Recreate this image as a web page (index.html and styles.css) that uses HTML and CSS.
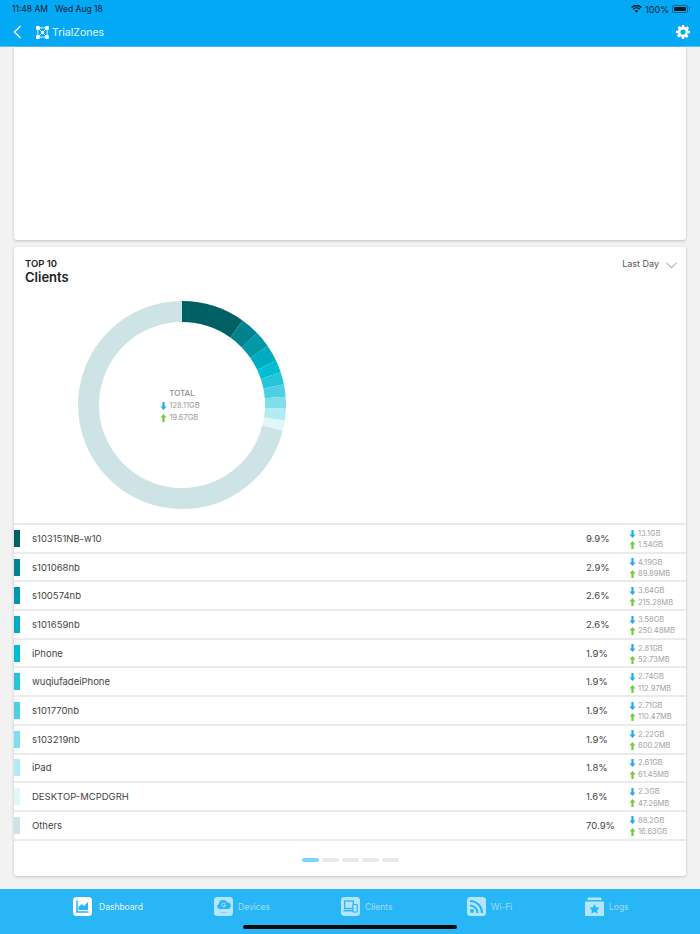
FILE: index.html
```html
<!DOCTYPE html>
<html lang="en">
<head>
    <meta charset="UTF-8">
    <meta name="viewport" content="width=device-width, initial-scale=1.0">
    <title>TrialZones</title>
    <link rel="stylesheet" href="styles.css">
</head>
<body>
    <div class="app">
        <header class="topbar">
            <div class="status">
                <span class="status-time">11:48 AM</span>
                <span class="status-date">Wed Aug 18</span>
                <span class="status-right">
                    <svg class="wifi" viewBox="0 0 16 12" width="11" height="8"><path d="M8 11.500 5.600 8.800a3.400 3.400 0 0 1 4.800 0zM3.900 7.100 2.500 5.500a7.900 7.900 0 0 1 11 0l-1.400 1.600a5.800 5.800 0 0 0-8.200 0zM1.400 4.400 0 2.900a11.500 11.500 0 0 1 16 0l-1.400 1.500a9.500 9.500 0 0 0-13.200 0z" fill="#06141c"/></svg>
                    <span>100%</span>
                    <span class="battery"><span class="battery-fill"></span></span>
                </span>
            </div>
            <nav class="navbar">
                <svg class="back" viewBox="0 0 9 14" width="9" height="14"><path d="M7.500 1 1.500 7l6 6" fill="none" stroke="#fff" stroke-width="1.500"/></svg>
                <svg class="logo" viewBox="0 0 14 14" width="13" height="13">
                    <g fill="#fff"><rect x="0" y="0" width="4" height="4" rx="1"/><rect x="10" y="0" width="4" height="4" rx="1"/><rect x="0" y="10" width="4" height="4" rx="1"/><rect x="10" y="10" width="4" height="4" rx="1"/><rect x="5.500" y="5.500" width="3" height="3"/></g>
                    <path d="M2 2h10v10H2zM2 2l10 10M12 2 2 12" fill="none" stroke="#fff" stroke-width=".9"/>
                </svg>
                <span class="brand">TrialZones</span>
                <svg class="gear" viewBox="0 0 24 24" width="14" height="14"><path fill="#fff" fill-rule="evenodd" d="M10 0h4l.7 3.400 1.900.8 2.900-1.900 2.800 2.800-1.900 2.900.8 1.900L24 10v4l-3.800.7-.8 1.900 1.900 2.900-2.800 2.800-2.900-1.900-1.900.8L14 24h-4l-.7-3.800-1.900-.8-2.900 1.900-2.800-2.800 1.900-2.900-.8-1.900L0 14v-4l3.800-.7.8-1.900-1.900-2.900 2.800-2.800 2.900 1.900 1.900-.8zM12 7.600a4.400 4.400 0 1 0 0 8.800 4.400 4.400 0 0 0 0-8.800z"/></svg>
            </nav>
        </header>

        <main class="content">
            <section class="card card-blank"></section>

            <section class="card card-top">
                <div class="card-head">
                    <div>
                        <div class="card-kicker">TOP 10</div>
                        <h2 class="card-title">Clients</h2>
                    </div>
                    <div class="range">
                        <span>Last Day</span>
                        <svg viewBox="0 0 12 7" width="11" height="7"><path d="M.5.5 6 6 11.500.5" fill="none" stroke="#a8a8a8" stroke-width="1.100"/></svg>
                    </div>
                </div>

                <div class="chart">
                    <svg class="donut" viewBox="0 0 208 208" width="208" height="208">
                        <g fill="none" stroke-width="21" transform="rotate(-90 104 104)">
                            <circle cx="104" cy="104" r="93.500" pathLength="100" stroke="#006064" stroke-dasharray="9.9 90.1"/>
                            <circle cx="104" cy="104" r="93.500" pathLength="100" stroke="#00838f" stroke-dasharray="2.9 97.1" stroke-dashoffset="-9.9"/>
                            <circle cx="104" cy="104" r="93.500" pathLength="100" stroke="#0097a7" stroke-dasharray="2.6 97.4" stroke-dashoffset="-12.8"/>
                            <circle cx="104" cy="104" r="93.500" pathLength="100" stroke="#00acc1" stroke-dasharray="2.6 97.4" stroke-dashoffset="-15.4"/>
                            <circle cx="104" cy="104" r="93.500" pathLength="100" stroke="#00bcd4" stroke-dasharray="1.9 98.1" stroke-dashoffset="-18"/>
                            <circle cx="104" cy="104" r="93.500" pathLength="100" stroke="#26c6da" stroke-dasharray="1.9 98.1" stroke-dashoffset="-19.9"/>
                            <circle cx="104" cy="104" r="93.500" pathLength="100" stroke="#4dd0e1" stroke-dasharray="1.9 98.1" stroke-dashoffset="-21.8"/>
                            <circle cx="104" cy="104" r="93.500" pathLength="100" stroke="#80deea" stroke-dasharray="1.9 98.1" stroke-dashoffset="-23.7"/>
                            <circle cx="104" cy="104" r="93.500" pathLength="100" stroke="#b2ebf2" stroke-dasharray="1.8 98.2" stroke-dashoffset="-25.6"/>
                            <circle cx="104" cy="104" r="93.500" pathLength="100" stroke="#e0f7fa" stroke-dasharray="1.6 98.4" stroke-dashoffset="-27.4"/>
                            <circle cx="104" cy="104" r="93.500" pathLength="100" stroke="#cde3e6" stroke-dasharray="71 29" stroke-dashoffset="-29"/>
                        </g>
                    </svg>
                    <div class="donut-label">
                        <div class="donut-total">TOTAL</div>
                        <div class="traffic-block">
                            <div class="traffic-line"><svg class="arrow" viewBox="0 0 8 9" width="7" height="8"><path d="M4 9 .5 5h2.200V0h2.600v5H7.500z" fill="#29a9f0"/></svg>128.11GB</div>
                            <div class="traffic-line"><svg class="arrow" viewBox="0 0 8 9" width="7" height="8"><path d="M4 0 .5 4h2.200v5h2.600V4H7.500z" fill="#7ac943"/></svg>19.67GB</div>
                        </div>
                    </div>
                </div>

                <ul class="rows">
                    <li class="row"><i class="swatch c1"></i><span class="row-name">s103151NB-w10</span><span class="row-pct">9.9%</span><div class="row-traffic"><div><svg class="arrow" viewBox="0 0 8 9" width="7" height="8"><path d="M4 9 .5 5h2.200V0h2.600v5H7.500z" fill="#29a9f0"/></svg>13.1GB</div><div><svg class="arrow" viewBox="0 0 8 9" width="7" height="8"><path d="M4 0 .5 4h2.200v5h2.600V4H7.500z" fill="#7ac943"/></svg>1.54GB</div></div></li>
                    <li class="row"><i class="swatch c2"></i><span class="row-name">s101068nb</span><span class="row-pct">2.9%</span><div class="row-traffic"><div><svg class="arrow" viewBox="0 0 8 9" width="7" height="8"><path d="M4 9 .5 5h2.200V0h2.600v5H7.500z" fill="#29a9f0"/></svg>4.19GB</div><div><svg class="arrow" viewBox="0 0 8 9" width="7" height="8"><path d="M4 0 .5 4h2.200v5h2.600V4H7.500z" fill="#7ac943"/></svg>89.89MB</div></div></li>
                    <li class="row"><i class="swatch c3"></i><span class="row-name">s100574nb</span><span class="row-pct">2.6%</span><div class="row-traffic"><div><svg class="arrow" viewBox="0 0 8 9" width="7" height="8"><path d="M4 9 .5 5h2.200V0h2.600v5H7.500z" fill="#29a9f0"/></svg>3.64GB</div><div><svg class="arrow" viewBox="0 0 8 9" width="7" height="8"><path d="M4 0 .5 4h2.200v5h2.600V4H7.500z" fill="#7ac943"/></svg>215.28MB</div></div></li>
                    <li class="row"><i class="swatch c4"></i><span class="row-name">s101659nb</span><span class="row-pct">2.6%</span><div class="row-traffic"><div><svg class="arrow" viewBox="0 0 8 9" width="7" height="8"><path d="M4 9 .5 5h2.200V0h2.600v5H7.500z" fill="#29a9f0"/></svg>3.58GB</div><div><svg class="arrow" viewBox="0 0 8 9" width="7" height="8"><path d="M4 0 .5 4h2.200v5h2.600V4H7.500z" fill="#7ac943"/></svg>250.48MB</div></div></li>
                    <li class="row"><i class="swatch c5"></i><span class="row-name">iPhone</span><span class="row-pct">1.9%</span><div class="row-traffic"><div><svg class="arrow" viewBox="0 0 8 9" width="7" height="8"><path d="M4 9 .5 5h2.200V0h2.600v5H7.500z" fill="#29a9f0"/></svg>2.81GB</div><div><svg class="arrow" viewBox="0 0 8 9" width="7" height="8"><path d="M4 0 .5 4h2.200v5h2.600V4H7.500z" fill="#7ac943"/></svg>52.73MB</div></div></li>
                    <li class="row"><i class="swatch c6"></i><span class="row-name">wuqiufadeiPhone</span><span class="row-pct">1.9%</span><div class="row-traffic"><div><svg class="arrow" viewBox="0 0 8 9" width="7" height="8"><path d="M4 9 .5 5h2.200V0h2.600v5H7.500z" fill="#29a9f0"/></svg>2.74GB</div><div><svg class="arrow" viewBox="0 0 8 9" width="7" height="8"><path d="M4 0 .5 4h2.200v5h2.600V4H7.500z" fill="#7ac943"/></svg>112.97MB</div></div></li>
                    <li class="row"><i class="swatch c7"></i><span class="row-name">s101770nb</span><span class="row-pct">1.9%</span><div class="row-traffic"><div><svg class="arrow" viewBox="0 0 8 9" width="7" height="8"><path d="M4 9 .5 5h2.200V0h2.600v5H7.500z" fill="#29a9f0"/></svg>2.71GB</div><div><svg class="arrow" viewBox="0 0 8 9" width="7" height="8"><path d="M4 0 .5 4h2.200v5h2.600V4H7.500z" fill="#7ac943"/></svg>110.47MB</div></div></li>
                    <li class="row"><i class="swatch c8"></i><span class="row-name">s103219nb</span><span class="row-pct">1.9%</span><div class="row-traffic"><div><svg class="arrow" viewBox="0 0 8 9" width="7" height="8"><path d="M4 9 .5 5h2.200V0h2.600v5H7.500z" fill="#29a9f0"/></svg>2.22GB</div><div><svg class="arrow" viewBox="0 0 8 9" width="7" height="8"><path d="M4 0 .5 4h2.200v5h2.600V4H7.500z" fill="#7ac943"/></svg>600.2MB</div></div></li>
                    <li class="row"><i class="swatch c9"></i><span class="row-name">iPad</span><span class="row-pct">1.8%</span><div class="row-traffic"><div><svg class="arrow" viewBox="0 0 8 9" width="7" height="8"><path d="M4 9 .5 5h2.200V0h2.600v5H7.500z" fill="#29a9f0"/></svg>2.61GB</div><div><svg class="arrow" viewBox="0 0 8 9" width="7" height="8"><path d="M4 0 .5 4h2.200v5h2.600V4H7.500z" fill="#7ac943"/></svg>61.45MB</div></div></li>
                    <li class="row"><i class="swatch c10"></i><span class="row-name">DESKTOP-MCPDGRH</span><span class="row-pct">1.6%</span><div class="row-traffic"><div><svg class="arrow" viewBox="0 0 8 9" width="7" height="8"><path d="M4 9 .5 5h2.200V0h2.600v5H7.500z" fill="#29a9f0"/></svg>2.3GB</div><div><svg class="arrow" viewBox="0 0 8 9" width="7" height="8"><path d="M4 0 .5 4h2.200v5h2.600V4H7.500z" fill="#7ac943"/></svg>47.26MB</div></div></li>
                    <li class="row"><i class="swatch c11"></i><span class="row-name">Others</span><span class="row-pct">70.9%</span><div class="row-traffic"><div><svg class="arrow" viewBox="0 0 8 9" width="7" height="8"><path d="M4 9 .5 5h2.200V0h2.600v5H7.500z" fill="#29a9f0"/></svg>88.2GB</div><div><svg class="arrow" viewBox="0 0 8 9" width="7" height="8"><path d="M4 0 .5 4h2.200v5h2.600V4H7.500z" fill="#7ac943"/></svg>16.63GB</div></div></li>
                </ul>

                <div class="pager">
                    <span class="dot dot-on"></span>
                    <span class="dot"></span>
                    <span class="dot"></span>
                    <span class="dot"></span>
                    <span class="dot"></span>
                </div>
            </section>
        </main>

        <footer class="tabbar">
            <a class="tab tab-dash tab-on">
                <svg viewBox="0 0 19 19" width="19" height="19"><rect width="19" height="19" rx="3.500" fill="#fff"/><path d="M4 3.500v11.500h11.500" fill="none" stroke="#29b6f6" stroke-width="1.600"/><path d="M5.500 13V10l3-3 2.500 2 4-4v8z" fill="#29b6f6"/></svg>
                <span>Dashboard</span>
            </a>
            <a class="tab tab-devices">
                <svg viewBox="0 0 19 19" width="19" height="19"><rect width="19" height="19" rx="3.500" fill="#b3e5fc"/><path d="M5.500 12a2.500 2.500 0 0 1-.6-4.900A4.500 4.500 0 0 1 9.500 3c1.600 0 3 .9 3.700 2.200A3.400 3.400 0 0 1 13.500 12z" fill="#29b6f6"/><path d="M11.500 6.900a2 2 0 1 0 .3 1.400H10" fill="none" stroke="#b3e5fc" stroke-width="1"/><path d="M6.500 15.500h6" stroke="#7fd0f5" stroke-width="1"/></svg>
                <span>Devices</span>
            </a>
            <a class="tab tab-clients">
                <svg viewBox="0 0 19 19" width="19" height="19"><rect width="19" height="19" rx="3.500" fill="#b3e5fc"/><rect x="3.700" y="4" width="8.600" height="7.500" fill="none" stroke="#29b6f6" stroke-width="1.300"/><path d="M2.500 13.700h9.500" stroke="#29b6f6" stroke-width="1.500"/><rect x="12" y="7.500" width="4.200" height="7.500" rx=".6" fill="#b3e5fc" stroke="#29b6f6" stroke-width="1.200"/></svg>
                <span>Clients</span>
            </a>
            <a class="tab tab-wifi">
                <svg viewBox="0 0 19 19" width="19" height="19"><rect width="19" height="19" rx="3.500" fill="#b3e5fc"/><circle cx="5" cy="14" r="2" fill="#29b6f6"/><path d="M3 8.500A7.500 7.500 0 0 1 10.500 16M3 4a12 12 0 0 1 12 12" fill="none" stroke="#29b6f6" stroke-width="2.200"/></svg>
                <span>Wi-Fi</span>
            </a>
            <a class="tab tab-logs">
                <svg viewBox="0 0 19 19" width="19" height="19"><path d="M2.500 1.500a1 1 0 0 1 1-1h12a1 1 0 0 1 1 1V3h-14z" fill="#b3e5fc"/><path d="M0 5.500a1 1 0 0 1 1-1h17a1 1 0 0 1 1 1V18a1 1 0 0 1-1 1H1a1 1 0 0 1-1-1z" fill="#b3e5fc"/><path d="m9.500 7 1.600 3.200 3.500.5-2.500 2.400.6 3.500-3.200-1.700-3.200 1.700.6-3.500-2.500-2.400 3.500-.5z" fill="#29b6f6"/></svg>
                <span>Logs</span>
            </a>
            <div class="home-bar"></div>
        </footer>
    </div>
</body>
</html>
```

FILE: styles.css
```css
* {
    box-sizing: border-box;
}

body {
    margin: 0;
    font-family: Inter, "Liberation Sans", sans-serif;
    background-color: #f2f2f3;
    color: #333;
}

.app {
    width: 700px;
    height: 934px;
    display: flex;
    flex-direction: column;
    overflow: hidden;
}

.topbar {
    height: 47px;
    flex-shrink: 0;
    background-color: #03a9f4;
    border-bottom: 1px solid #4fc3f7;
}

.status {
    height: 18px;
    display: flex;
    align-items: center;
    padding: 0 10px 0 12px;
    font-size: 8.5px;
    color: #06202e;
}

.status-date {
    margin-left: 7px;
}

.status-right {
    margin-left: auto;
    display: flex;
    align-items: center;
    gap: 3px;
    font-size: 9px;
}

.battery {
    position: relative;
    width: 16px;
    height: 8px;
    margin-right: 2px;
    border: 1px solid #0a6c9e;
    border-radius: 2px;
    padding: 1px;
    display: block;
}

.battery::after {
    content: "";
    position: absolute;
    right: -3px;
    top: 1px;
    width: 1px;
    height: 4px;
    background: #0a6c9e;
}

.battery-fill {
    display: block;
    height: 100%;
    background: #06141c;
    border-radius: 1px;
}

.navbar {
    height: 28px;
    display: flex;
    align-items: center;
    padding: 0 10px 0 13px;
    color: #fff;
}

.logo {
    margin-left: 14px;
}

.brand {
    margin-left: 3px;
    font-size: 10.5px;
    font-weight: 400;
    color: #e6f6fe;
}

.gear {
    margin-left: auto;
}

.content {
    flex: 1;
    padding: 0 14px;
}

.card {
    background-color: #fff;
    border-radius: 0 0 3px 3px;
    box-shadow: 0 1px 3px rgba(60, 70, 90, 0.28);
}

.card-blank {
    height: 193px;
}

.card-top {
    margin-top: 7px;
    height: 629px;
    border-radius: 3px;
    display: flex;
    flex-direction: column;
}

.card-head {
    display: flex;
    justify-content: space-between;
    padding: 11px 9px 0 11px;
    height: 44px;
}

.card-kicker {
    font-size: 9.5px;
    font-weight: 600;
    color: #222;
    line-height: 11px;
}

.card-title {
    margin: 0;
    font-size: 13px;
    font-weight: 600;
    color: #222;
    line-height: 16px;
}

.range {
    display: flex;
    align-items: flex-start;
    gap: 7px;
    font-size: 9px;
    color: #555;
    line-height: 12px;
}

.range svg {
    margin-top: 4px;
}

.chart {
    position: relative;
    height: 232px;
    padding: 10px 0 0 64px;
}

.donut {
    display: block;
}

.donut-label {
    position: absolute;
    left: 64px;
    top: 10px;
    width: 208px;
    height: 208px;
    padding-top: 86px;
    display: flex;
    flex-direction: column;
    align-items: center;
    font-size: 7.5px;
    color: #999;
    line-height: 12px;
}

.donut-total {
    font-size: 8px;
    font-weight: 500;
    color: #8d8d8d;
}

.traffic-block {
    margin-top: 1px;
    margin-left: -4px;
}

.traffic-line {
    display: flex;
    align-items: center;
    gap: 2px;
}

.rows {
    list-style: none;
    margin: 0;
    padding: 0;
    border-top: 2px solid #e6e8ea;
}

.row {
    height: 28.7px;
    display: flex;
    align-items: center;
    border-bottom: 2px solid #e9ebed;
    font-size: 9.5px;
    color: #444;
}

.swatch {
    width: 6px;
    height: 17px;
    margin-right: 12px;
}

.c1 { background-color: #006064; }
.c2 { background-color: #00838f; }
.c3 { background-color: #0097a7; }
.c4 { background-color: #00acc1; }
.c5 { background-color: #00bcd4; }
.c6 { background-color: #26c6da; }
.c7 { background-color: #4dd0e1; }
.c8 { background-color: #80deea; }
.c9 { background-color: #b2ebf2; }
.c10 { background-color: #e0f7fa; }
.c11 { background-color: #cde3e6; }

.row-name {
    flex: 1;
}

.row-pct {
    width: 43px;
}

.row-traffic {
    width: 57px;
    padding-top: 2px;
    font-size: 7.5px;
    line-height: 11.5px;
    color: #a2a2a2;
}

.row-traffic div {
    display: flex;
    align-items: center;
    gap: 2px;
}

.pager {
    flex: 1;
    display: flex;
    align-items: center;
    justify-content: center;
    gap: 3px;
    padding-top: 4px;
}

.dot {
    width: 17px;
    height: 4px;
    border-radius: 2px;
    background-color: #e8e8e8;
}

.dot-on {
    background-color: #7fd3fb;
}

.tabbar {
    position: relative;
    height: 45px;
    flex-shrink: 0;
    background-color: #29b6f6;
    font-size: 8.5px;
}

.tab {
    position: absolute;
    top: 8px;
    display: flex;
    align-items: center;
    gap: 5px;
    color: #9fddfb;
}

.tab-on {
    color: #e8f7fe;
    gap: 7px;
}

.tab-dash { left: 73px; }
.tab-devices { left: 214px; }
.tab-clients { left: 341px; }
.tab-wifi { left: 467px; }
.tab-logs { left: 585px; }

.home-bar {
    position: absolute;
    left: 243px;
    bottom: 5px;
    width: 214px;
    height: 4px;
    border-radius: 2px;
    background-color: #0a0a0a;
}
```
